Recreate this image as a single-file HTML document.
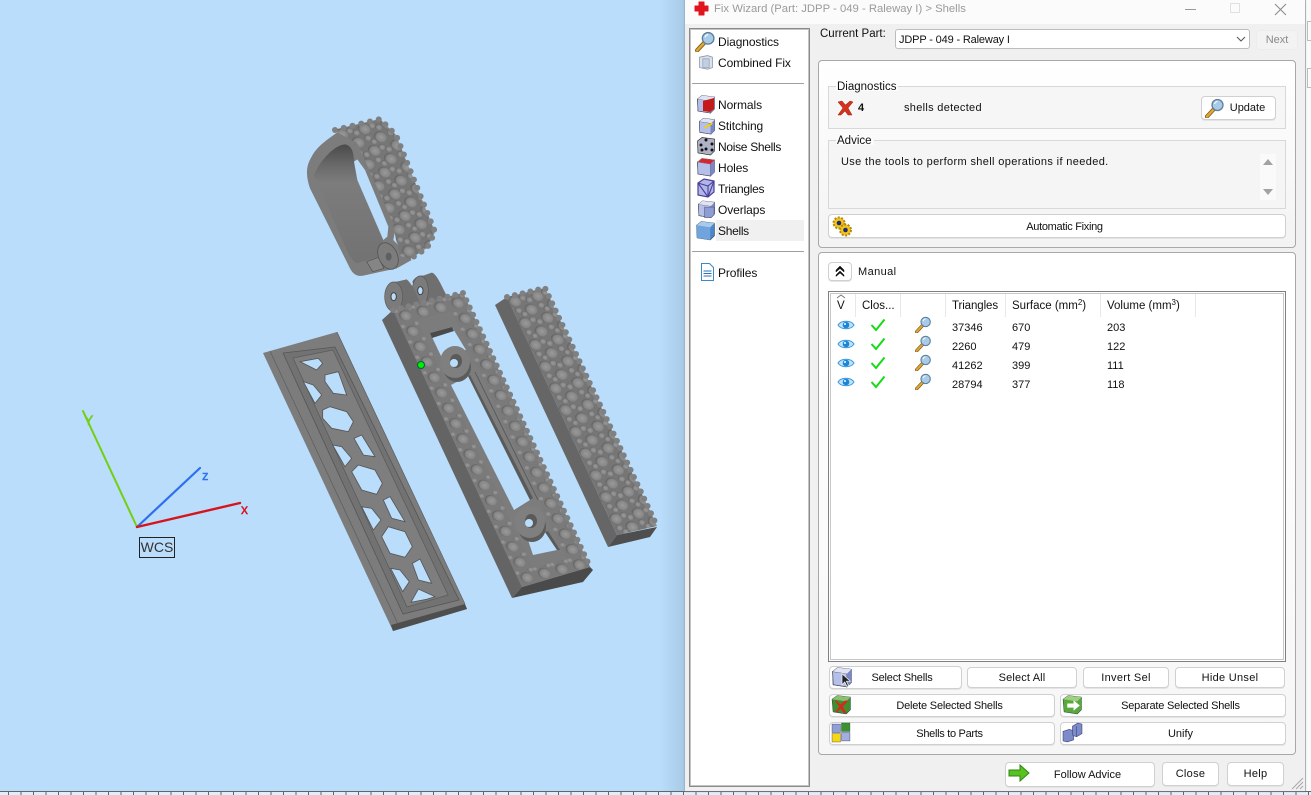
<!DOCTYPE html>
<html><head><meta charset="utf-8"><title>Fix Wizard</title>
<style>
html,body{margin:0;padding:0;width:1311px;height:795px;overflow:hidden;background:#b9ddfa;font-family:"Liberation Sans",sans-serif;font-size:12px;color:#111}
.a{position:absolute}
.t{position:absolute;white-space:nowrap;line-height:14px}
.l{letter-spacing:-.1px}
.n{font-size:11px}
.h{font-size:11.5px}
.b{position:absolute;box-sizing:border-box;background:#fff;border:1px solid #d0d0d0;border-radius:4px;text-align:center;white-space:nowrap;box-shadow:0 1px 0 #e4e4e4;color:#111;font-size:11px}
.w{letter-spacing:-.2px}
.ic{position:absolute}
.s{font-size:8px;vertical-align:4px;line-height:0}
</style></head><body>

<svg class="a" style="left:0;top:0" width="1311" height="795" viewBox="0 0 1311 795">
<defs>
<linearGradient id="sh" x1="0" x2="1" y1="0" y2="0"><stop offset="0" stop-color="#b9ddfa"/><stop offset="1" stop-color="#a6c9e6"/></linearGradient>
<radialGradient id="bg" cx=".55" cy=".55" r=".52"><stop offset="0" stop-color="#9a9a9a"/><stop offset=".75" stop-color="#868686"/><stop offset="1" stop-color="#646464"/></radialGradient>
<linearGradient id="wall" x1="0" x2="0" y1="0" y2="1"><stop offset="0" stop-color="#4a4a4a"/><stop offset=".18" stop-color="#6a6a6a"/><stop offset=".32" stop-color="#7c7c7c"/><stop offset="1" stop-color="#727272"/></linearGradient>
<pattern id="bp" width="23" height="24" patternUnits="userSpaceOnUse" patternTransform="matrix(.97,-.235,.42,.906,507,297)">
<rect width="23" height="24" fill="#767676"/>
<circle cx="5.500" cy="6" r="6" fill="url(#bg)"/><circle cx="17" cy="18" r="6" fill="url(#bg)"/>
<circle cx="14" cy="4.500" r="3.200" fill="url(#bg)"/><circle cx="19.500" cy="8" r="3.200" fill="url(#bg)"/>
<circle cx="5" cy="16" r="3.200" fill="url(#bg)"/><circle cx="9" cy="21" r="3" fill="url(#bg)"/>
</pattern>
<pattern id="rp" width="23" height="24" patternUnits="userSpaceOnUse" patternTransform="matrix(.97,-.235,.42,.906,334,130)">
<rect width="23" height="24" fill="#767676"/>
<circle cx="5.500" cy="6" r="6" fill="url(#bg)"/><circle cx="17" cy="18" r="6" fill="url(#bg)"/>
<circle cx="14" cy="4.500" r="3.200" fill="url(#bg)"/><circle cx="19.500" cy="8" r="3.200" fill="url(#bg)"/>
<circle cx="5" cy="16" r="3.200" fill="url(#bg)"/><circle cx="9" cy="21" r="3" fill="url(#bg)"/>
</pattern>
<pattern id="mp" width="18" height="17" patternUnits="userSpaceOnUse" patternTransform="matrix(.97,-.235,.42,.906,393,310)">
<rect width="18" height="17" fill="#7a7a7a"/>
<circle cx="9" cy="8.500" r="5.800" fill="url(#bg)"/>
<circle cx="2" cy="1.500" r="2.800" fill="url(#bg)"/><circle cx="16" cy="1.500" r="2.800" fill="url(#bg)"/>
</pattern>
</defs>
<rect x="660" y="0" width="26" height="795" fill="url(#sh)"/>

<!-- WCS -->
<g fill="none" stroke-linecap="round">
<line x1="137" y1="527" x2="83" y2="411" stroke="#74cf10" stroke-width="2"/>
<line x1="137" y1="527" x2="200" y2="468" stroke="#2e6ff0" stroke-width="2.200"/>
<line x1="137" y1="527" x2="240" y2="503" stroke="#d7141c" stroke-width="2.400"/>
</g>
<text x="84" y="425" font-size="14" fill="#74cf10" stroke="#74cf10" stroke-width=".5" font-family="Liberation Sans">Y</text>
<text x="202" y="480" font-size="13" fill="#2e6ff0" stroke="#2e6ff0" stroke-width=".4" font-family="Liberation Sans">z</text>
<text x="241" y="514" font-size="14" fill="#d7141c" stroke="#d7141c" stroke-width=".4" font-family="Liberation Sans">x</text>
<rect x="139.500" y="537.500" width="35" height="20" fill="none" stroke="#222"/>
<text x="157" y="552" font-size="14" fill="#333" text-anchor="middle" font-family="Liberation Sans">WCS</text>

<!-- Ring -->
<g transform="translate(250 100) scale(.33333)">
<path d="M262 97C230 120 200 140 185 170 170 195 165 220 180 265L300 505C310 525 325 530 340 527L440 505 485 480 430 420 438 380 330 130Z" fill="#7c7c7c"/>
<path d="M192 225C205 190 250 135 285 133 300 135 312 150 312 185L322 240 400 420 388 445 385 470 320 490C305 480 300 470 290 450Z" fill="url(#wall)"/>
<path d="M312 185L322 240 400 420 412 410 415 380 345 210 322 178Z" fill="#b9ddfa"/>
<path d="M350 485L385 472 402 505 368 515Z" fill="#858585" stroke="#505050" stroke-width="2"/>
<ellipse cx="414" cy="468" rx="28" ry="42" fill="#7c7c7c" stroke="#555" stroke-width="2.500" transform="rotate(-25 414 468)"/>
<ellipse cx="416" cy="470" rx="9" ry="12" fill="#5f5f5f"/>
</g>
<path d="M333 130 L380 119 L396 135 L435 232 L427 248 L410 259 L400 256 L396 240 L393 223 L357 143Z" fill="url(#rp)"/>
<path d="M335 130 L380 119 L396 135 L435 232 L427 248 L410 259" fill="none" stroke="#808080" stroke-width="6" stroke-linecap="round" stroke-dasharray="0 9"/>

<!-- Right piece -->
<path d="M495 305 L507 297 L617 535 L608 547Z" fill="#666"/>
<path d="M608 547 L617 535 L657 527 L650 537Z" fill="#4e4e4e"/>
<path d="M507 297 L545 288 L657 526 L617 535Z" fill="url(#bp)"/>
<path d="M507 297 L545 288 L657 526" fill="none" stroke="#808080" stroke-width="6" stroke-linecap="round" stroke-dasharray="0 8"/>

<!-- Hinges -->
<g transform="translate(250 100) scale(.33333)">
<path d="M487 545C495 530 510 525 520 527L545 518C560 520 575 560 592 590L510 615Z" fill="#6f6f6f"/>
<ellipse cx="511" cy="572" rx="24" ry="44" fill="#7b7b7b" stroke="#5a5a5a" stroke-width="2"/>
<ellipse cx="511" cy="572" rx="8" ry="12" fill="#b9ddfa" stroke="#444" stroke-width="3"/>
<path d="M405 590C405 560 420 545 440 545L470 538C485 550 500 580 512 615L430 635C415 620 405 605 405 590Z" fill="#6f6f6f"/>
<ellipse cx="431" cy="590" rx="27" ry="44" fill="#7b7b7b" stroke="#5a5a5a" stroke-width="2"/>
<ellipse cx="431" cy="590" rx="8" ry="12" fill="#b9ddfa" stroke="#444" stroke-width="3"/>
</g>

<!-- Middle piece -->
<path d="M382 320 L393 310 L522 587 L512 598Z" fill="#646464"/>
<path d="M512 598 L522 587 L590 567 L593 570 L583 582Z" fill="#4a4a4a"/>
<path d="M393 310 L463 293 L590 567 L522 587Z" fill="#7c7c7c"/>
<path d="M430 333 L452 327 L466 350 L456 352 L444 358 L441 356Z" fill="#b9ddfa"/>
<path d="M430 333 L452 327 L454 331 L432 338Z" fill="#4a4a4a"/>
<path d="M451 385 L468 376 L530 500 L514 510Z" fill="#b9ddfa"/>
<path d="M468 376 L470 375 L533 498 L530 500Z" fill="#5a5a5a"/>
<path d="M475 372 L538 500" stroke="#555" stroke-width=".8" fill="none"/>
<path d="M528 540 L545 532 L557 550 L533 555Z" fill="#b9ddfa"/>
<path d="M545 532 L548 531 L560 550 L557 550Z" fill="#5a5a5a"/>
<ellipse cx="457" cy="367" rx="14" ry="15" fill="#5c5c5c"/>
<ellipse cx="455" cy="362" rx="15" ry="16" fill="#7f7f7f"/>
<ellipse cx="456" cy="361" rx="6" ry="7" fill="#5a5a5a"/><ellipse cx="454" cy="363" rx="4" ry="4" fill="#b9ddfa"/>
<ellipse cx="532" cy="527" rx="14" ry="15" fill="#5c5c5c"/>
<ellipse cx="530" cy="522" rx="15" ry="16" fill="#7f7f7f"/>
<ellipse cx="531" cy="521" rx="6" ry="7" fill="#5a5a5a"/><ellipse cx="529" cy="523" rx="4" ry="4" fill="#b9ddfa"/>
<path d="M393 310 L410.500 305.800 L539.500 582 L522 587Z" fill="url(#mp)"/>
<path d="M445.500 297.200 L463 293 L590 567 L572.500 572Z" fill="url(#mp)"/>
<path d="M393 310 L463 293 L469 307 L399 324Z" fill="url(#mp)"/>
<path d="M516 573 L584 553 L590 567 L522 587Z" fill="url(#mp)"/>
<path d="M393 310 L463 293 L590 567" fill="none" stroke="#808080" stroke-width="6" stroke-linecap="round" stroke-dasharray="0 8"/>

<!-- Left piece -->
<path d="M263 353 L337 332 L467 609 L393 631Z" fill="#7c7c7c"/>
<path d="M393 631 L391 625 L465 604 L467 609Z" fill="#4e4e4e"/>
<path d="M270 351 L398 624 M337 332 L465 604" fill="none" stroke="#5c5c5c" stroke-width=".7"/>
<path d="M283 353 L335 347 L459 600 L403 614Z" fill="#727272" stroke="#555" stroke-width=".8"/>
<path d="M293 358 L333 350 L448 595 L407 607Z" fill="#7e7e7e" stroke="#5c5c5c" stroke-width=".8"/>
<g transform="translate(250 340) scale(.33333)" fill="#b9ddfa" stroke="#565656" stroke-width="2.500">
<path d="M150 65L205 55 218 70 200 90Z"/>
<path d="M225 105L265 95 290 165 250 160 225 125Z"/>
<path d="M160 125L190 135 215 165 195 190Z"/>
<path d="M218 210L240 200 290 215 310 245 295 275 245 265 218 235Z"/>
<path d="M312 295L335 285 375 350 340 345Z"/>
<path d="M248 315L275 320 305 355 285 380Z"/>
<path d="M305 395L325 375 375 390 397 430 380 463 335 450Z"/>
<path d="M400 480L420 470 465 545 425 535Z"/>
<path d="M335 500L365 505 393 540 370 570Z"/>
<path d="M395 590L415 560 465 575 487 620 465 652 420 640Z"/>
<path d="M487 670L510 657 545 730 505 720Z"/>
<path d="M422 685L450 690 478 725 458 755Z"/>
<path d="M483 787L505 747 555 770 530 778Z"/>
</g>
<circle cx="421" cy="365" r="3.500" fill="#00f000" stroke="#063" stroke-width="1"/>
</svg>

<!-- ruler -->
<div class="a" style="left:0;top:791px;width:1311px;height:4px;background:#dfeefb;border-top:1px solid #666;box-sizing:border-box"></div>
<div class="a" style="left:8px;top:791px;width:1303px;height:4px;background:repeating-linear-gradient(90deg,#666 0,#666 1px,transparent 1px,transparent 12.5px)"></div>

<!-- right strip -->
<div class="a" style="left:1305px;top:0;width:6px;height:791px;background:#fbfbfb;border-left:1px solid #c4c4c4;box-sizing:border-box"></div>
<div class="a" style="left:1307px;top:21px;width:4px;height:20px;border:1px solid #bbb;border-right:0;box-sizing:border-box"></div>
<div class="a" style="left:1307px;top:68px;width:4px;height:20px;border:1px solid #bbb;border-right:0;box-sizing:border-box"></div>

<!-- window -->
<div class="a" style="left:685px;top:0;width:620px;height:791px;background:#f0f0f0;box-shadow:0 0 2px #889"></div>
<div class="a" style="left:685px;top:0;width:620px;height:24px;background:#fbfbfb"></div>

<!-- title -->
<svg class="ic" style="left:694px;top:1px" width="15" height="15" viewBox="0 0 15 15"><path d="M5 1h5v4h4v5h-4v4H5v-4H1V5h4z" fill="#e0141c" stroke-linejoin="round" stroke="#e0141c"/></svg>
<div class="t" style="left:714px;top:2px;color:#9a9a9a;font-size:11.300px">Fix Wizard (Part: JDPP - 049 - Raleway I) &gt; Shells</div>
<svg class="ic" style="left:1180px;top:0" width="110" height="20" viewBox="0 0 110 20">
<path d="M5 9.500h11" stroke="#999"/><rect x="50.500" y="3.500" width="9" height="9" fill="none" stroke="#e0e0e0"/>
<path d="M95 4l11 11M106 4L95 15" stroke="#888" fill="none"/>
</svg>

<!-- left list -->
<div class="a" style="left:689px;top:28px;width:121px;height:759px;box-sizing:border-box;background:#fff;border:1px solid #8a8a8a;outline:1px solid #c4c4c4;outline-offset:-2px"></div>
<div class="a" style="left:692px;top:83px;width:112px;height:1px;background:#a0a0a0"></div>
<div class="a" style="left:692px;top:251px;width:112px;height:1px;background:#a0a0a0"></div>
<div class="a" style="left:716px;top:220px;width:88px;height:21px;background:#f0f0f0"></div>

<svg width="0" height="0" style="position:absolute"><defs>
<symbol id="mag" viewBox="0 0 20 20"><path d="M2 18.500L9 11" stroke="#7a5a10" stroke-width="4" stroke-linecap="round"/><path d="M2 18.500L9 11" stroke="#e0a838" stroke-width="2.400" stroke-linecap="round"/><circle cx="12.500" cy="7" r="5.500" fill="#a9cbe8" stroke="#5d7f9c" stroke-width="1.300"/><path d="M9.500 6a3.500 3.500 0 0 1 3-2.500" stroke="#fff" fill="none"/></symbol>
<symbol id="cube" viewBox="0 0 20 20"><path d="M1.500 5L6 1.500 18.500 3v12l-4 4L2 17z" fill="#8f9fd8" stroke="#445" stroke-width=".7"/><path d="M1.500 5L14.500 7v12L2 17z" fill="#b4c0ea" stroke="#445" stroke-width=".6"/><path d="M14.500 7l4-4v12l-4 4z" fill="#7a88c8"/><path d="M1.500 5L6 1.500 18.500 3l-4 4z" fill="#dfe3f4"/></symbol>
<symbol id="eye" viewBox="0 0 18 12"><path d="M1 6C4 1 14 1 17 6 14 11 4 11 1 6Z" fill="#bfe3fa" stroke="#3a9ae0"/><circle cx="9" cy="6" r="3.300" fill="#1b86d8"/><circle cx="8" cy="5" r="1" fill="#fff"/></symbol>
<symbol id="chk" viewBox="0 0 16 14"><path d="M1.500 7L6 12 14.500 1.500" fill="none" stroke="#14dc14" stroke-width="2"/></symbol>
</defs></svg>

<svg class="ic" style="left:695px;top:31px" width="21" height="21"><use href="#mag"/></svg>
<svg class="ic" style="left:698px;top:54px" width="16" height="16" viewBox="0 0 20 20"><path d="M2 4l10-2 6 2v13l-6 2-10-2z" fill="#dbe2ee" stroke="#8a97a8"/><path d="M6 6h8v11H6z" fill="#c3cfe0" stroke="#9aa8bc"/></svg>
<svg class="ic" style="left:696px;top:94px" width="20" height="20" viewBox="0 0 20 20"><use href="#cube"/><path d="M7 7l11-3v11l-4 3-7-1z" fill="#c51a1a"/></svg>
<svg class="ic" style="left:698px;top:116px" width="18" height="20" viewBox="0 0 20 20"><use href="#cube"/><path d="M7 12l9-5" stroke="#f3d000" stroke-width="2"/></svg>
<svg class="ic" style="left:696px;top:136px" width="20" height="20" viewBox="0 0 20 20"><path d="M1.500 5L6 1.500 18.500 3v12l-4 4L2 17z" fill="#aeb2c4" stroke="#333" stroke-width=".7"/><g fill="#111"><circle cx="5" cy="9" r="1.500"/><circle cx="10" cy="13" r="1.500"/><circle cx="6" cy="14" r="1.500"/><circle cx="10" cy="4" r="1.500"/><circle cx="16" cy="8" r="1.500"/><circle cx="16" cy="14" r="1.500"/></g></svg>
<svg class="ic" style="left:696px;top:157px" width="20" height="20" viewBox="0 0 20 20"><use href="#cube"/><path d="M2 5L6 1.500 18.500 3l-4 4z" fill="#d3262e"/></svg>
<svg class="ic" style="left:696px;top:178px" width="20" height="20" viewBox="0 0 20 20"><path d="M2 5l6-4 10 2v11l-6 5-10-2z" fill="#b2b6e6" stroke="#4a3f9e" stroke-width="1.200"/><path d="M2 5l10 3 6-5M12 8v11M2 5l10 14M18 3l-6 16" fill="none" stroke="#4a3f9e" stroke-width="1.100"/></svg>
<svg class="ic" style="left:697px;top:199px" width="19" height="20" viewBox="0 0 20 20"><use href="#cube"/><path d="M8 8h10v8l-3 3H8z" fill="#8e9cd8" stroke="#556" stroke-width=".6"/></svg>
<svg class="ic" style="left:695px;top:220px" width="21" height="21" viewBox="0 0 20 20"><path d="M1.500 5L6 1.500 18.500 3v12l-4 4L2 17z" fill="#4a86c8" stroke="#345" stroke-width=".6"/><path d="M1.500 5L14.500 7v12L2 17z" fill="#6fa4dc"/><path d="M1.500 5L6 1.500 18.500 3l-4 4z" fill="#a8cbec"/></svg>
<svg class="ic" style="left:700px;top:263px" width="15" height="18" viewBox="0 0 15 18"><path d="M1.500.5h8l4 4v13h-12z" fill="#fff" stroke="#3a8ac8"/><path d="M3.500 8h8M3.500 10.500h8M3.500 13h8" stroke="#2a70b8"/></svg>

<div class="t l" style="left:718px;top:35px">Diagnostics</div>
<div class="t l" style="left:718px;top:56px">Combined Fix</div>
<div class="t l" style="left:718px;top:98px">Normals</div>
<div class="t l" style="left:718px;top:119px">Stitching</div>
<div class="t" style="left:718px;top:140px;letter-spacing:-.3px">Noise Shells</div>
<div class="t l" style="left:718px;top:161px">Holes</div>
<div class="t" style="left:718px;top:182px;letter-spacing:-.3px">Triangles</div>
<div class="t l" style="left:718px;top:203px">Overlaps</div>
<div class="t" style="left:718px;top:224px;letter-spacing:-.3px">Shells</div>
<div class="t l" style="left:718px;top:266px">Profiles</div>

<!-- top row -->
<div class="t h" style="left:820px;top:27px">Current Part:</div>
<div class="a" style="left:895px;top:29px;width:355px;height:20px;box-sizing:border-box;background:#fff;border:1px solid #bdbdbd;border-radius:3px;padding:3px 0 0 3px;line-height:14px;font-size:11px;letter-spacing:-.15px">JDPP - 049 - Raleway I</div>
<svg class="ic" style="left:1236px;top:36px" width="10" height="6"><path d="M1 1l4 4 4-4" stroke="#555" fill="none"/></svg>
<div class="b" style="left:1256px;top:30px;width:42px;height:20px;line-height:19px;background:#f3f3f3;border-color:#ececec;box-shadow:none;color:#8a8a8a">Next</div>

<!-- Panel 1 -->
<div class="a" style="left:818px;top:60px;width:478px;height:188px;box-sizing:border-box;border:1px solid #a8a8a8;border-radius:4px;background:linear-gradient(#fff,#f3f3f3)"></div>
<div class="a" style="left:828px;top:86px;width:458px;height:43px;box-sizing:border-box;border:1px solid #d8d8d8;background:#f6f6f6"></div>
<div class="t h" style="left:836px;top:81px;background:#fdfdfd;padding:0 2px 0 1px;height:10px;line-height:12px">Diagnostics</div>
<svg class="ic" style="left:837px;top:100px" width="17" height="16" viewBox="0 0 17 16"><path d="M1 2l4-1 3.500 4L13 1l3 1-5 6 4 7-4 0-3-4-4 4H1l5-7z" fill="#d2321e" stroke="#a01808" stroke-width=".5"/></svg>
<div class="t" style="left:858px;top:101px;font-weight:bold;font-size:11px">4</div>
<div class="t" style="left:904px;top:101px;font-size:11px;letter-spacing:.3px">shells detected</div>
<div class="b" style="left:1201px;top:96px;width:75px;height:24px;line-height:23px;padding-left:18px">Update</div>
<svg class="ic" style="left:1205px;top:98px" width="20" height="20"><use href="#mag"/></svg>

<div class="a" style="left:828px;top:140px;width:458px;height:69px;box-sizing:border-box;border:1px solid #d8d8d8;background:#f5f5f5"></div>
<div class="t h" style="left:836px;top:135px;background:#fbfbfb;padding:0 2px 0 1px;height:10px;line-height:12px">Advice</div>
<div class="t" style="left:841px;top:155px;font-size:11px;letter-spacing:.36px">Use the tools to perform shell operations if needed.</div>
<div class="a" style="left:1260px;top:154px;width:16px;height:46px;background:#fafafa"></div>
<svg class="ic" style="left:1262px;top:158px" width="12" height="38"><path d="M6 1l5 6H1z" fill="#a2a2a2"/><path d="M1 31h10l-5 6z" fill="#a2a2a2"/></svg>
<div class="b w" style="left:828px;top:214px;width:458px;height:24px;line-height:24px;padding-left:15px;letter-spacing:-.3px">Automatic Fixing</div>
<svg class="ic" style="left:831px;top:215px" width="22" height="22" viewBox="0 0 22 22"><g fill="#f5c31a" stroke="#b08a10" stroke-width="2" stroke-dasharray="2 1.500"><circle cx="8" cy="8" r="5.500"/><circle cx="14.500" cy="15" r="5.500"/></g><circle cx="8" cy="8" r="2.300" fill="#1c2a78"/><circle cx="14.500" cy="15" r="2.300" fill="#1c2a78"/></svg>

<!-- Panel 2 -->
<div class="a" style="left:818px;top:252px;width:478px;height:503px;box-sizing:border-box;border:1px solid #a8a8a8;border-radius:4px;background:linear-gradient(#fff 0,#fff 10%,#f6f6f6)"></div>
<div class="b" style="left:828px;top:262px;width:24px;height:19px"></div>
<svg class="ic" style="left:835px;top:265px" width="10" height="12"><path d="M1 5l4-4 4 4v2L5 3.500 1 7zM1 10l4-4 4 4v1.500L5 8 1 11.500z" fill="#111" stroke="#111" stroke-width=".5"/></svg>
<div class="t" style="left:858px;top:265px;font-size:11px;letter-spacing:.4px">Manual</div>

<div class="a" style="left:828px;top:291px;width:458px;height:371px;box-sizing:border-box;background:#fff;border:1px solid #808080;outline:1px solid #c8c8c8;outline-offset:-3px"></div>
<svg class="ic" style="left:830px;top:293px" width="370" height="25">
<path d="M25.500 1v23M70.500 1v23M115.500 1v23M175.500 1v23M270.500 1v23M365.500 1v23" stroke="#e8e8e8"/>
<path d="M7 5l4-3 4 3" fill="none" stroke="#777"/>
</svg>
<div class="t h" style="left:837px;top:299px">V</div>
<div class="t h" style="left:862px;top:299px">Clos...</div>
<div class="t h" style="left:952px;top:299px;letter-spacing:-.1px">Triangles</div>
<div class="t h" style="left:1012px;top:299px">Surface (mm<span class="s">2</span>)</div>
<div class="t h" style="left:1107px;top:299px">Volume (mm<span class="s">3</span>)</div>

<svg class="ic" style="left:837px;top:319px" width="18" height="12"><use href="#eye"/></svg>
<svg class="ic" style="left:837px;top:338px" width="18" height="12"><use href="#eye"/></svg>
<svg class="ic" style="left:837px;top:357px" width="18" height="12"><use href="#eye"/></svg>
<svg class="ic" style="left:837px;top:376px" width="18" height="12"><use href="#eye"/></svg>
<svg class="ic" style="left:870px;top:318px" width="16" height="14"><use href="#chk"/></svg>
<svg class="ic" style="left:870px;top:337px" width="16" height="14"><use href="#chk"/></svg>
<svg class="ic" style="left:870px;top:356px" width="16" height="14"><use href="#chk"/></svg>
<svg class="ic" style="left:870px;top:375px" width="16" height="14"><use href="#chk"/></svg>
<svg class="ic" style="left:915px;top:316px" width="17" height="17"><use href="#mag"/></svg>
<svg class="ic" style="left:915px;top:335px" width="17" height="17"><use href="#mag"/></svg>
<svg class="ic" style="left:915px;top:354px" width="17" height="17"><use href="#mag"/></svg>
<svg class="ic" style="left:915px;top:373px" width="17" height="17"><use href="#mag"/></svg>

<div class="t n" style="left:952px;top:321px">37346</div><div class="t n" style="left:1012px;top:321px">670</div><div class="t n" style="left:1107px;top:321px">203</div>
<div class="t n" style="left:952px;top:340px">2260</div><div class="t n" style="left:1012px;top:340px">479</div><div class="t n" style="left:1107px;top:340px">122</div>
<div class="t n" style="left:952px;top:359px">41262</div><div class="t n" style="left:1012px;top:359px">399</div><div class="t n" style="left:1107px;top:359px">111</div>
<div class="t n" style="left:952px;top:378px">28794</div><div class="t n" style="left:1012px;top:378px">377</div><div class="t n" style="left:1107px;top:378px">118</div>

<!-- Bottom buttons -->
<div class="b w" style="left:829px;top:666px;width:133px;height:23px;line-height:22px;padding-left:13px">Select Shells</div>
<svg class="ic" style="left:831px;top:666px" width="22" height="22" viewBox="0 0 20 20"><use href="#cube"/><path d="M10 7v10l2.500-2.500 2 4 1.500-.7-2-4h3.500z" fill="#222" stroke="#fff" stroke-width=".6"/></svg>
<div class="b" style="left:967px;top:667px;width:110px;height:21px;line-height:20px;letter-spacing:.15px">Select All</div>
<div class="b" style="left:1083px;top:667px;width:86px;height:21px;line-height:20px;letter-spacing:.3px">Invert Sel</div>
<div class="b" style="left:1175px;top:667px;width:110px;height:21px;line-height:20px;letter-spacing:.3px">Hide Unsel</div>

<div class="b w" style="left:829px;top:694px;width:226px;height:23px;line-height:22px;padding-left:15px">Delete Selected Shells</div>
<svg class="ic" style="left:831px;top:694px" width="21" height="21" viewBox="0 0 20 20"><path d="M1 5l5-3.500L18.500 3v12l-4 4L2 17z" fill="#3f8f2e" stroke="#244" stroke-width=".5"/><path d="M1 5L6 1.500 18.500 3l-4 4z" fill="#8cc06e"/><path d="M5 6l4 4 5-4 2 1-5 5 4 6h-3l-3-4-4 4-1-1 4-5-4-5z" fill="#d7281e"/></svg>
<div class="b w" style="left:1060px;top:694px;width:226px;height:23px;line-height:22px;padding-left:15px">Separate Selected Shells</div>
<svg class="ic" style="left:1062px;top:694px" width="21" height="21" viewBox="0 0 20 20"><path d="M1 5l5-3.500L18.500 3v12l-4 4L2 17z" fill="#5aa83a" stroke="#244" stroke-width=".5"/><path d="M1 5L6 1.500 18.500 3l-4 4z" fill="#9fd07e"/><path d="M5 9h6V6l6 5-6 5v-3H5z" fill="#fff"/></svg>
<div class="b w" style="left:829px;top:722px;width:226px;height:23px;line-height:22px;padding-left:15px;letter-spacing:-.3px">Shells to Parts</div>
<svg class="ic" style="left:831px;top:722px" width="21" height="21" viewBox="0 0 20 20"><rect x="1" y="2" width="8" height="8" fill="#8f9fd8" stroke="#556" stroke-width=".5"/><rect x="10" y="1" width="8" height="8" fill="#3f9030" stroke="#264" stroke-width=".5"/><rect x="1" y="11" width="8" height="8" fill="#f2d816" stroke="#764" stroke-width=".5"/><rect x="10" y="10" width="8" height="8" fill="#a3aee0" stroke="#556" stroke-width=".5"/></svg>
<div class="b" style="left:1060px;top:722px;width:226px;height:23px;line-height:22px;padding-left:15px">Unify</div>
<svg class="ic" style="left:1062px;top:722px" width="21" height="21" viewBox="0 0 20 20"><path d="M1 9l6-2 3 1V4l5-3 4 1v9l-5 3-3-1v4l-6 2-4-1z" fill="#7d8bc8" stroke="#3c4680" stroke-width=".6"/><path d="M10 8v5M14 4v10" stroke="#3c4680" stroke-width=".6"/></svg>

<div class="b" style="left:1005px;top:762px;width:150px;height:25px;line-height:25px;padding-left:15px">Follow Advice</div>
<svg class="ic" style="left:1008px;top:764px" width="22" height="18" viewBox="0 0 22 18"><path d="M1 6h11V1l9 8-9 8v-5H1z" fill="#58c020" stroke="#2c8a0c"/></svg>
<div class="b" style="left:1162px;top:762px;width:57px;height:24px;line-height:23px;letter-spacing:.3px">Close</div>
<div class="b" style="left:1227px;top:762px;width:57px;height:24px;line-height:23px;letter-spacing:.3px">Help</div>
<svg class="ic" style="left:1291px;top:777px" width="13" height="13"><path d="M1 12L12 1M5 12l7-7M9 12l3-3" stroke="#a8a8a8" fill="none"/></svg>

</body></html>
